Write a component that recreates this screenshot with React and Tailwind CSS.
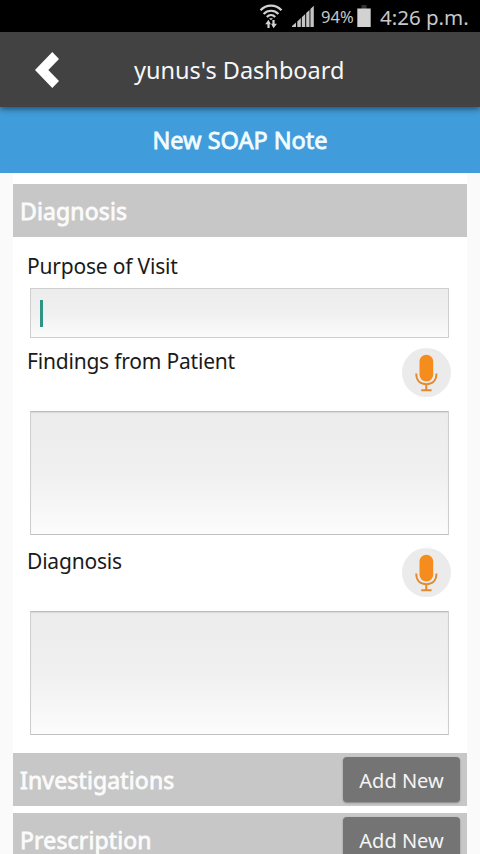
import React, { useState } from 'react';

function WifiIcon() {
  return (
    <svg width="24" height="25" viewBox="0 0 24 25" fill="none" stroke="#d2d2d2" className="shrink-0">
      <path d="M1.500 6.300C7.300 .1 16.700 .1 22.500 6.300" strokeWidth="2.200" />
      <path d="M4.600 9.900c4.100-4.200 10.700-4.200 14.800 0" strokeWidth="2.200" />
      <path d="M7.800 13c2.400-2.400 6-2.400 8.400 0" strokeWidth="2.200" />
      <path d="M10 14.200h4l-2 2z" fill="#d2d2d2" stroke="none" />
      <path d="M9.500 24v-6M14.500 16v6" strokeWidth="2.200" />
      <path d="M6.200 20.200l3.300-4.400 2.400 4.400zM12.100 19.800l2.400 4.400 3.500-4.400z" fill="#d2d2d2" stroke="none" />
    </svg>
  );
}

function SignalIcon() {
  return (
    <svg width="22" height="22" viewBox="0 0 22 22" fill="#c4c4c4" className="shrink-0">
      <path d="M0 22v-1l4-3.500V22z" />
      <path d="M5.300 22v-5.600L8.800 13V22z" />
      <path d="M9.800 22V12.200L13.200 9V22z" />
      <path d="M14.200 22V8L17.500 5V22z" />
      <path d="M18.400 22V4L21.800 .8V22z" />
    </svg>
  );
}

function BatteryIcon() {
  return (
    <svg width="14" height="22" viewBox="0 0 14 22" className="shrink-0">
      <path d="M4.500 0h5v4h-5z" fill="#333" />
      <path d="M.3 3.500h13.400V22H.3z" fill="#d2d2d2" />
    </svg>
  );
}

function MicButton() {
  return (
    <button className="block size-[49px] rounded-full bg-[#ebebeb]">
      <svg width="49" height="49" viewBox="0 0 49 49" fill="none">
        <rect x="17.500" y="6.700" width="13.700" height="26.800" rx="6.800" fill="#f58c1e" />
        <path d="M14.200 25.500c0 6.500 3.600 10.600 10.100 10.600s10.200-4.100 10.200-10.600" stroke="#e48a2c" strokeWidth="1.900" />
        <path d="M24.300 36v5.800M19.200 42.200h10.400" stroke="#e48a2c" strokeWidth="2" />
      </svg>
    </button>
  );
}

function Section({ title, action }) {
  return (
    <div className="flex h-[53px] shrink-0 items-center justify-between bg-[#c7c7c7] px-[7px]">
      <h2 className="text-[23px] leading-[30px] tracking-[0.15px] text-[#fbfbfb] [-webkit-text-stroke:0.8px_#fbfbfb]">{title}</h2>
      {action && (
        <button className="h-[45px] w-[117px] rounded-[4px] bg-[#747474] pt-[2px] text-[20px] text-[#f4f4f4] shadow-[0_1px_2px_rgba(0,0,0,0.35)]">
          {action}
        </button>
      )}
    </div>
  );
}

function NoteField({ label }) {
  const [note, setNote] = useState('');

  return (
    <div className="h-[200px] shrink-0">
      <div className="flex h-[63px] justify-between pl-[14px] pr-[16px]">
        <label className="-mt-px text-[21px] leading-[28px] tracking-[-0.2px] text-[#1a1a1a]">{label}</label>
        <MicButton />
      </div>
      <textarea
        value={note}
        onChange={(e) => setNote(e.target.value)}
        className="ml-[17px] block h-[124px] w-[419px] resize-none border border-[#cfcfcf] border-t-[#bcbcbc] border-b-[#c0c0c0] bg-linear-to-b from-[#ececec] via-[#f0f0f0] to-[#fcfcfc] px-2 shadow-[inset_0_1px_1px_rgba(0,0,0,0.08)] outline-none"
      />
    </div>
  );
}

export default function App() {
  return (
    <div className="flex h-[854px] w-[480px] flex-col overflow-hidden bg-[#fafafa] font-['Noto_Sans',sans-serif]">
      {/* Status bar */}
      <div className="flex h-8 shrink-0 items-center bg-black pl-[259px] text-[#c8c8c8]">
        <WifiIcon />
        <div className="ml-[9px]">
          <SignalIcon />
        </div>
        <span className="ml-[7px] w-[33px] pt-[2px] text-[16.500px] whitespace-nowrap">94%</span>
        <div className="ml-[3px]">
          <BatteryIcon />
        </div>
        <span className="ml-[9px] pt-[3px] text-[20.500px] whitespace-nowrap">4:26 p.m.</span>
      </div>

      {/* App bar */}
      <header className="z-10 flex h-[75px] shrink-0 items-center bg-[#424242] pl-[35px] shadow-[0_2px_6px_rgba(0,0,0,0.5)]">
        <svg width="24" height="36" viewBox="0 0 24 36" fill="#fff" className="shrink-0">
          <path d="M17.300 0L24 7L13.300 18L24 29L17.300 36L0 18z" />
        </svg>
        <h1 className="ml-[75px] pt-[3px] text-[23.500px] whitespace-nowrap text-[#f7f7f7]">yunus's Dashboard</h1>
      </header>

      <div className="flex h-[66px] shrink-0 items-center justify-center bg-[#419cdb] pt-[2px] text-[23.500px] text-[#f2fcff] [-webkit-text-stroke:0.8px_#f2fcff]">
        New SOAP Note
      </div>

      {/* Note form */}
      <main className="mx-[13px] flex flex-1 flex-col overflow-hidden bg-white pt-[11px]">
        <Section title="Diagnosis" />
        <div className="h-[111px] shrink-0 pt-[15px]">
          <label className="block h-[36px] pl-[14px] text-[21px] leading-[28px] tracking-[-0.2px] text-[#1a1a1a]">Purpose of Visit</label>
          <div className="ml-[17px] flex h-[50px] w-[419px] items-center border border-[#cfcfcf] bg-linear-to-b from-[#ececec] via-[#f0f0f0] to-[#fbfbfb] pl-[9px]">
            <span className="h-[27px] w-[3px] bg-[#2f9486]" />
          </div>
        </div>
        <NoteField label="Findings from Patient" />
        <NoteField label="Diagnosis" />
        <div className="mt-[5px] flex shrink-0 flex-col gap-[7px]">
          <Section title="Investigations" action="Add New" />
          <Section title="Prescription" action="Add New" />
        </div>
      </main>
    </div>
  );
}
